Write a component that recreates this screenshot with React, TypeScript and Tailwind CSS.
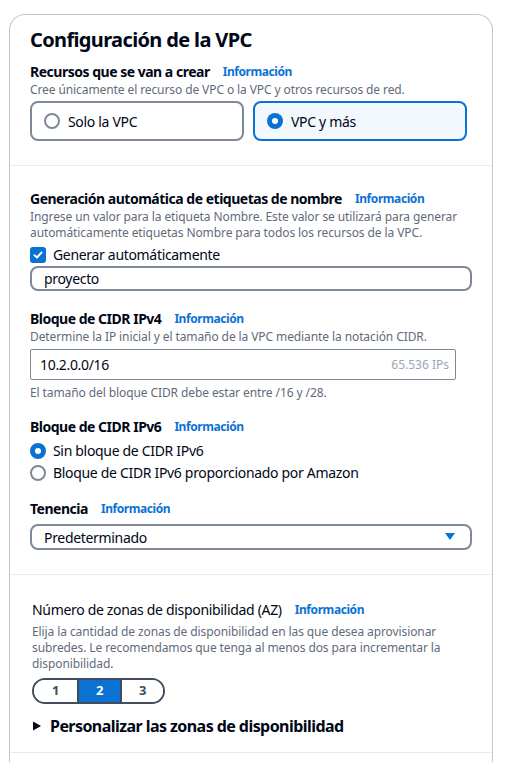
import React, { useState } from 'react';

const Info = () => (
  <a className="ml-[13px] text-[12px] font-bold tracking-[-0.035em] text-[#0972d3] leading-none">Información</a>
);

const Hint = ({ children, className = '' }: { children: React.ReactNode; className?: string }) => (
  <p className={`text-[12px] text-[#5f6b7a] leading-[16px] tracking-[-0.008em] ${className}`}>{children}</p>
);

export default function App() {
  const [vpcMode, setVpcMode] = useState('more');
  const [ipv6, setIpv6] = useState('none');
  const [az, setAz] = useState(2);

  return (
    <div className="bg-white min-h-[762px] pt-[14px] pl-[9px] pr-[16px] overflow-hidden text-[#000716] tracking-[-0.02em] font-['Noto_Sans',sans-serif]">
      <div className="border border-[#c6c6cd] rounded-t-[16px] border-b-0">
        {/* cabecera */}
        <div className="px-5 pt-[11px] pb-[24px] border-b border-[#e9ebed]">
          <h2 className="text-[20px] font-bold leading-[28px] tracking-[-0.032em]">Configuración de la VPC</h2>
          <div className="mt-[8px] flex items-center h-[20px]">
            <span className="text-[14px] font-bold leading-[20px] tracking-[-0.035em]">Recursos que se van a crear</span>
            <Info />
          </div>
          <Hint>Cree únicamente el recurso de VPC o la VPC y otros recursos de red.</Hint>
          <div className="mt-[3px] grid grid-cols-2 gap-[9px] pr-[5px]">
            <button
              onClick={() => setVpcMode('only')}
              className={`h-[40px] rounded-[8px] border-2 flex items-center gap-[8px] px-[12px] text-[14px] ${vpcMode === 'only' ? 'border-[#0972d3] bg-[#f2f8fd]' : 'border-[#7d8998] bg-white'}`}
            >
              <Radio on={vpcMode === 'only'} />
              Solo la VPC
            </button>
            <button
              onClick={() => setVpcMode('more')}
              className={`h-[40px] rounded-[8px] border-2 flex items-center gap-[8px] px-[12px] text-[14px] ${vpcMode === 'more' ? 'border-[#0972d3] bg-[#f2f8fd]' : 'border-[#7d8998] bg-white'}`}
            >
              <Radio on={vpcMode === 'more'} />
              VPC y más
            </button>
          </div>
        </div>

        {/* etiquetas y CIDR */}
        <div className="px-5 pt-[23px] pb-[24px] border-b border-[#e9ebed]">
          <div className="flex items-center h-[20px]">
            <span className="text-[14px] font-bold leading-[20px] tracking-[-0.035em]">Generación automática de etiquetas de nombre</span>
            <Info />
          </div>
          <Hint>
            Ingrese un valor para la etiqueta Nombre. Este valor se utilizará para generar automáticamente etiquetas Nombre para todos los recursos de la VPC.
          </Hint>
          <label className="mt-[4px] flex items-center gap-[7px] text-[14px] leading-[20px]">
            <span className="w-[16px] h-[16px] rounded-[3px] bg-[#0972d3] flex items-center justify-center">
              <svg width="12" height="12" viewBox="0 0 12 12" fill="none">
                <path d="M2.5 6.2 L5 8.5 L9.5 3.5" stroke="white" strokeWidth="2" strokeLinecap="round" strokeLinejoin="round" />
              </svg>
            </span>
            Generar automáticamente
          </label>
          <div className="mt-[1px] h-[25px] rounded-[8px] border-2 border-[#7d8998] flex items-center px-[12px] text-[14px]">proyecto</div>

          <div className="mt-[18px] flex items-center h-[20px]">
            <span className="text-[14px] font-bold leading-[20px] tracking-[-0.035em]">Bloque de CIDR IPv4</span>
            <Info />
          </div>
          <Hint>Determine la IP inicial y el tamaño de la VPC mediante la notación CIDR.</Hint>
          <div className="mt-[4px] mr-[16px] h-[31px] border border-[#7d8998] rounded-[2px] flex items-center justify-between pl-[9px] pr-[6px]">
            <span className="text-[14px]">10.2.0.0/16</span>
            <span className="text-[12px] text-[#9ba7b6] tracking-normal">65.536 IPs</span>
          </div>
          <Hint className="mt-[5px]">El tamaño del bloque CIDR debe estar entre /16 y /28.</Hint>

          <div className="mt-[16px] flex items-center h-[20px]">
            <span className="text-[14px] font-bold leading-[20px] tracking-[-0.035em]">Bloque de CIDR IPv6</span>
            <Info />
          </div>
          <div className="mt-[4px] flex flex-col gap-[2px]">
            <label className="flex items-center gap-[7px] text-[14px] leading-[20px]" onClick={() => setIpv6('none')}>
              <Radio on={ipv6 === 'none'} />
              Sin bloque de CIDR IPv6
            </label>
            <label className="flex items-center gap-[7px] text-[14px] leading-[20px]" onClick={() => setIpv6('amazon')}>
              <Radio on={ipv6 === 'amazon'} />
              Bloque de CIDR IPv6 proporcionado por Amazon
            </label>
          </div>

          <div className="mt-[16px] flex items-center h-[20px]">
            <span className="text-[14px] font-bold leading-[20px] tracking-[-0.035em]">Tenencia</span>
            <Info />
          </div>
          <div className="mt-[5px] h-[26px] rounded-[8px] border-2 border-[#7d8998] flex items-center justify-between pl-[12px] pr-[14px] text-[14px]">
            <span>Predeterminado</span>
            <svg width="12" height="10" viewBox="0 0 12 10">
              <path d="M1 1 H11 L6 8 Z" fill="#0972d3" />
            </svg>
          </div>
        </div>

        {/* zonas */}
        <div className="pl-[22px] pr-5 pt-[25px] pb-[15px] border-b border-[#e9ebed]">
          <div className="flex items-center h-[20px]">
            <span className="text-[14px] leading-[20px]">Número de zonas de disponibilidad (AZ)</span>
            <Info />
          </div>
          <Hint className="mt-[4px] pr-[20px]">
            Elija la cantidad de zonas de disponibilidad en las que desea aprovisionar subredes. Le recomendamos que tenga al menos dos para incrementar la disponibilidad.
          </Hint>
          <div className="mt-[6px] inline-flex h-[26px] rounded-full border-2 border-[#414d5c] overflow-hidden">
            {[1, 2, 3].map((n, i) => (
              <button
                key={n}
                onClick={() => setAz(n)}
                className={`w-[43px] flex items-center justify-center text-[13px] font-bold ${i > 0 ? 'border-l-2 border-[#414d5c]' : ''} ${az === n ? 'bg-[#0972d3] text-white' : 'bg-white text-[#414d5c]'}`}
              >
                {n}
              </button>
            ))}
          </div>
          <div className="mt-[11px] flex items-center gap-[8px]">
            <svg width="10" height="10" viewBox="0 0 10 10">
              <path d="M1 0.5 L9 5 L1 9.5 Z" fill="#000716" />
            </svg>
            <span className="text-[16px] font-bold leading-[22px] tracking-[-0.035em]">Personalizar las zonas de disponibilidad</span>
          </div>
        </div>
        <div className="h-[20px]" />
      </div>
    </div>
  );
}

function Radio({ on }: { on: boolean }) {
  return on ? (
    <span className="w-[16px] h-[16px] rounded-full bg-[#0972d3] flex items-center justify-center shrink-0">
      <span className="w-[6px] h-[6px] rounded-full bg-white" />
    </span>
  ) : (
    <span className="w-[16px] h-[16px] rounded-full border-2 border-[#7d8998] bg-white shrink-0" />
  );
}
